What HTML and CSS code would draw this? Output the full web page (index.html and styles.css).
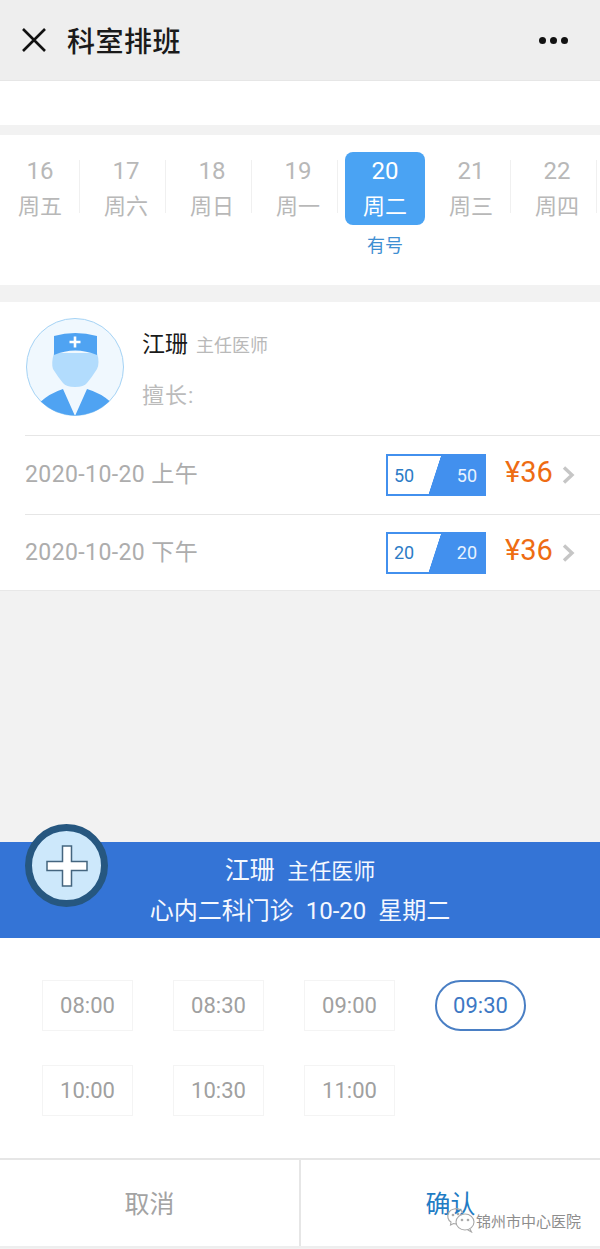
FILE: index.html
```html
<!DOCTYPE html>
<html lang="zh-CN">
<head>
  <meta charset="UTF-8">
  <meta name="viewport" content="width=device-width, initial-scale=1.0">
  <title>科室排班</title>
  <link rel="stylesheet" href="styles.css">
</head>
<body>
  <div class="page">
    <div class="topbar">
      <svg class="close-icon" width="26" height="26" viewBox="0 0 26 26"><path d="M2 2 L24 24 M24 2 L2 24" stroke="#111" stroke-width="2.6" fill="none"/></svg>
      <div class="topbar-title">科室排班</div>
      <div class="more"><span></span><span></span><span></span></div>
    </div>

    <div class="blank"></div>

    <div class="dates">
      <div class="date-row">
        <div class="date"><b>16</b><span>周五</span></div>
        <div class="date"><b>17</b><span>周六</span></div>
        <div class="date"><b>18</b><span>周日</span></div>
        <div class="date"><b>19</b><span>周一</span></div>
        <div class="date active"><b>20</b><span>周二</span><em>有号</em></div>
        <div class="date"><b>21</b><span>周三</span></div>
        <div class="date"><b>22</b><span>周四</span></div>
      </div>
    </div>

    <div class="doctor">
      <div class="doctor-info">
        <svg class="avatar" width="100" height="100" viewBox="0 0 100 100">
          <defs><clipPath id="round"><circle cx="50" cy="50" r="48.500"/></clipPath></defs>
          <circle cx="50" cy="50" r="48.500" fill="#f0f8fe" stroke="#a5d3f5" stroke-width="1"/>
          <g clip-path="url(#round)">
            <path d="M14 86 Q25 76 38 72 L50 99 L62 72 Q76 76 87 86 L87 100 L14 100 Z" fill="#4fa3f2"/>
          </g>
          <path d="M29 36 Q26 46 28 52 Q33 60 38 66 Q41 70 50 70 Q59 70 62 66 Q67 60 72 52 Q75 46 72 36 Z" fill="#b2dcfd"/>
          <path d="M29 19 Q50 13 72 19 L72 38 Q50 29 29 38 Z" fill="#4fa3f2"/>
          <path d="M50 19.500 V30.500 M44.500 25 H55.500" stroke="#fff" stroke-width="2.6" fill="none"/>
        </svg>
        <div class="doctor-text">
          <div class="doctor-name">江珊<span>主任医师</span></div>
          <div class="doctor-skill">擅长:</div>
        </div>
      </div>

      <div class="slot-row">
        <div class="slot-date">2020-10-20 上午</div>
        <div class="quota">
          <span class="quota-left">50</span>
          <span class="quota-right">50</span>
        </div>
        <div class="price">¥36</div>
        <svg class="chevron" width="13" height="20" viewBox="0 0 13 20"><path d="M2 2.500 L10 10 L2 17.500" stroke="#c6c6c6" stroke-width="3.400" fill="none"/></svg>
      </div>
      <div class="slot-row">
        <div class="slot-date">2020-10-20 下午</div>
        <div class="quota">
          <span class="quota-left">20</span>
          <span class="quota-right">20</span>
        </div>
        <div class="price">¥36</div>
        <svg class="chevron" width="13" height="20" viewBox="0 0 13 20"><path d="M2 2.500 L10 10 L2 17.500" stroke="#c6c6c6" stroke-width="3.400" fill="none"/></svg>
      </div>
    </div>

    <div class="gap"></div>

    <div class="band">
      <div class="plus-btn">
        <svg width="44" height="44" viewBox="0 0 44 44"><path d="M17.500 2 H26.500 V17.500 H42 V26.500 H26.500 V42 H17.500 V26.500 H2 V17.500 H17.500 Z" fill="#fff" stroke="#44657f" stroke-width="1.500"/></svg>
      </div>
      <div class="band-name">江珊&nbsp;&nbsp;<span>主任医师</span></div>
      <div class="band-line">心内二科门诊&nbsp;&nbsp;10-20&nbsp;&nbsp;星期二</div>
    </div>

    <div class="times">
      <div class="time">08:00</div>
      <div class="time">08:30</div>
      <div class="time">09:00</div>
      <div class="time picked">09:30</div>
      <div class="time">10:00</div>
      <div class="time">10:30</div>
      <div class="time">11:00</div>
    </div>

    <div class="actions">
      <div class="action">取消</div>
      <div class="action confirm">确认</div>
    </div>

    <div class="watermark">
      <svg width="30" height="26" viewBox="0 0 30 26" fill="none" stroke="#a8a8a8" stroke-width="1.100">
        <path d="M17 6 C15 2 11 1 8 2 C3 3 1 7 2 11 C2.500 13 4 14.500 5 15 L4.500 18 L7.500 16.500 C8.500 16.800 9.500 17 10.500 16.800"/>
        <ellipse cx="19" cy="15" rx="9" ry="8"/>
        <path d="M24 22 L25.500 25 L21.500 22.800"/>
        <circle cx="16" cy="13" r="0.800" fill="#a8a8a8"/>
        <circle cx="22" cy="13" r="0.800" fill="#a8a8a8"/>
        <circle cx="7" cy="8" r="0.800" fill="#a8a8a8"/>
        <circle cx="12" cy="7" r="0.800" fill="#a8a8a8"/>
      </svg>
      <span>锦州市中心医院</span>
    </div>
  </div>
</body>
</html>
```

FILE: styles.css
```css
* {
  box-sizing: border-box;
}

body {
  margin: 0;
  background: #fff;
  font-family: Roboto, "Noto Sans CJK SC", sans-serif;
}

.page {
  position: relative;
  width: 600px;
  height: 1249px;
  overflow: hidden;
  background: #f2f2f2;
}

.topbar {
  height: 81px;
  display: flex;
  align-items: center;
  padding: 0 32px 0 21px;
  background: #eeeeee;
  border-bottom: 1px solid #e6e6e6;
}

.close-icon {
  margin-right: 20px;
}

.topbar-title {
  flex: 1;
  font-size: 28px;
  font-weight: 500;
  color: #1a1a1a;
  letter-spacing: 0.500px;
}

.more {
  display: flex;
  gap: 4px;
}

.more span {
  width: 7px;
  height: 7px;
  border-radius: 50%;
  background: #111;
}

.blank {
  height: 44px;
  background: #fff;
}

.dates {
  height: 150px;
  margin-top: 10px;
  padding-top: 17px;
  background: #fff;
}

.date-row {
  display: flex;
  gap: 6px;
}

.date {
  position: relative;
  width: 80px;
  height: 73px;
  display: flex;
  flex-direction: column;
  align-items: center;
  color: #b8b8b8;
}

/* thin line between the days */
.date::after {
  content: "";
  position: absolute;
  top: 8px;
  bottom: 12px;
  right: 0;
  width: 1px;
  background: #f0f0f0;
}

.date b {
  font-weight: 400;
  font-size: 24px;
  line-height: 28px;
  margin-top: 5px;
}

.date span {
  font-size: 22px;
  line-height: 32px;
  margin-top: 6px;
}

.date em {
  position: absolute;
  top: 83px;
  font-style: normal;
  font-size: 18px;
  line-height: 22px;
  color: #3f8fd2;
}

.date.active {
  background: #4aa3f3;
  color: #fff;
  border-radius: 8px;
  margin-left: 1px;
}

.date.active::after {
  display: none;
}

.doctor {
  margin-top: 17px;
  background: #fff;
  border-bottom: 1px solid #e8e8e8;
}

.doctor-info {
  height: 133px;
  display: flex;
  padding: 15px 0 0 25px;
}

.doctor-text {
  margin-left: 17px;
}

.doctor-name {
  font-size: 23px;
  line-height: 30px;
  margin-top: 13px;
  color: #1a1a1a;
}

.doctor-name span {
  margin-left: 8px;
  font-size: 18px;
  color: #b9b9b9;
}

.doctor-skill {
  margin-top: 20px;
  font-size: 22px;
  letter-spacing: 1px;
  line-height: 30px;
  color: #bbb;
}

.slot-row {
  height: 79px;
  margin-left: 25px;
  padding-right: 25px;
  display: flex;
  align-items: center;
  border-top: 1px solid #e6e6e6;
}

.slot-row:last-child {
  height: 76px;
}

.slot-date {
  flex: 1;
  margin-bottom: 6px;
  font-size: 23px;
  letter-spacing: 0.400px;
  color: #adadad;
}

.quota {
  width: 100px;
  height: 42px;
  display: flex;
  align-items: center;
  justify-content: space-between;
  padding: 0 7px 0 6px;
  border: 2px solid #4290ee;
  font-size: 18px;
  background: linear-gradient(108deg, #fff 0 48.600%, #4290ee 49.200% 100%);
}

.quota-left {
  color: #2c7cc6;
}

.quota-right {
  color: #e8f3ff;
}

.price {
  width: 47px;
  margin-left: 19px;
  margin-bottom: 6px;
  font-size: 29px;
  white-space: nowrap;
  color: #ee6c13;
}

.chevron {
  margin-left: 10px;
}

.gap {
  height: 251px;
}

.band {
  position: relative;
  height: 96px;
  padding-top: 11px;
  text-align: center;
  background: #3474d6;
  color: #f4f8ff;
}

.band-name {
  font-size: 25px;
  line-height: 36px;
}

.band-name span {
  font-size: 22px;
}

.band-line {
  font-size: 24px;
  line-height: 36px;
  margin-top: 3px;
}

.plus-btn {
  position: absolute;
  left: 25px;
  top: -18px;
  width: 83px;
  height: 83px;
  display: flex;
  align-items: center;
  justify-content: center;
  border: 7px solid #265780;
  border-radius: 50%;
  background: #cde8fb;
}

.times {
  height: 220px;
  padding: 42px 0 0 42px;
  display: grid;
  grid-template-columns: repeat(4, 91px);
  grid-auto-rows: 51px;
  column-gap: 40px;
  row-gap: 34px;
  background: #fff;
}

.time {
  display: flex;
  align-items: center;
  justify-content: center;
  font-size: 22px;
  color: #a0a0a0;
  border: 1px solid #f4f4f4;
}

.time.picked {
  border: 2px solid #4a7fc4;
  border-radius: 26px;
  color: #3d78c4;
}

.actions {
  height: 90px;
  display: flex;
  background: #fff;
  border-top: 2px solid #e6e6e6;
  border-bottom: 2px solid #eeeeee;
}

.action {
  flex: 1;
  display: flex;
  align-items: center;
  justify-content: center;
  padding-bottom: 2px;
  font-size: 25px;
  color: #a3a3a3;
}

.action.confirm {
  border-left: 2px solid #e6e6e6;
  color: #1f7cc4;
}

.watermark {
  position: absolute;
  left: 446px;
  top: 1207px;
  display: flex;
  align-items: center;
  font-size: 15px;
  color: #8d8d8d;
}
```
